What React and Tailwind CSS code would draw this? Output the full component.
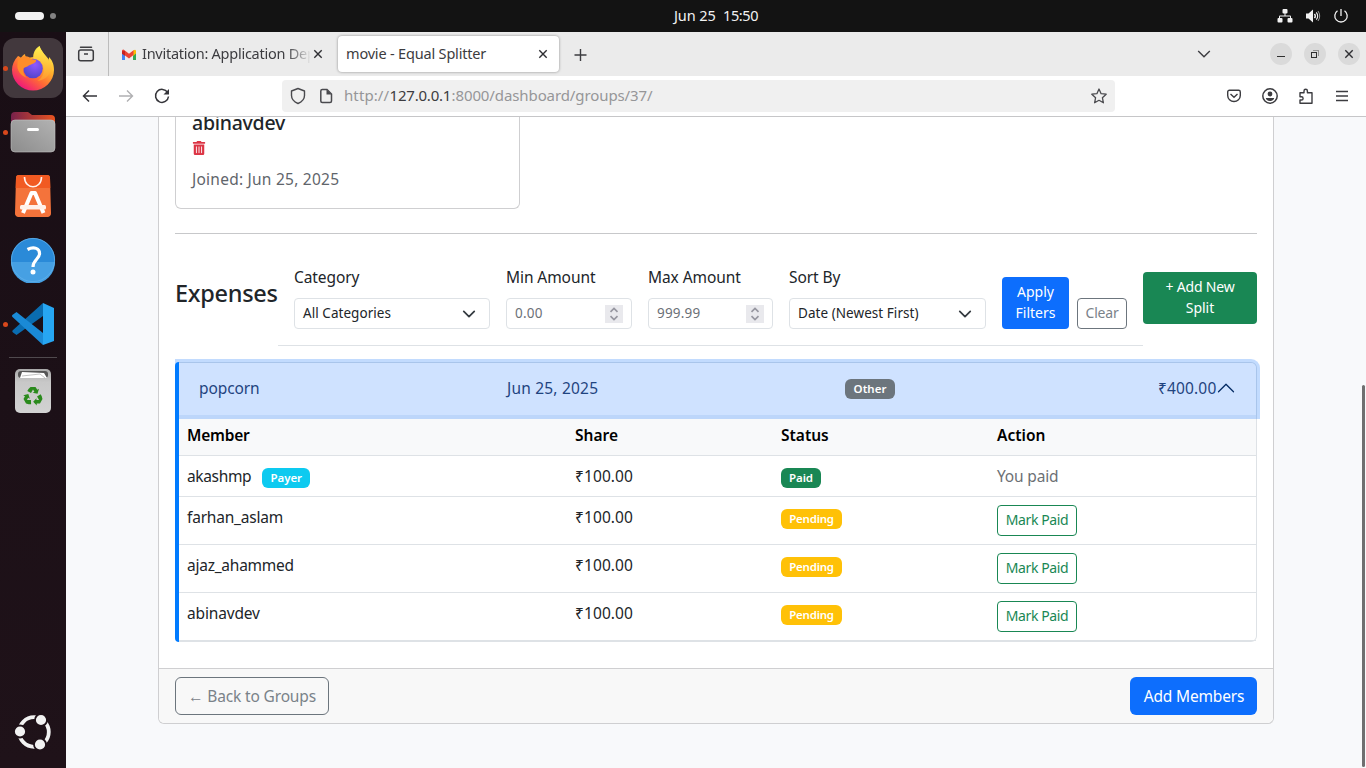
import { FaTrashAlt } from "react-icons/fa";

const MEMBERS = [
  { name: "akashmp", tracking: "tracking-[-0.35px]", payer: true },
  { name: "farhan_aslam", tracking: "tracking-[-0.2px]" },
  { name: "ajaz_ahammed", tracking: "tracking-[-0.24px]" },
  { name: "abinavdev", tracking: "tracking-[-0.16px]" },
];

function TopBar() {
  return (
    <header className="relative flex h-8 shrink-0 items-center justify-between bg-[#131313] text-[#f2f2f2]">
      <div className="flex items-center gap-[6px] pl-[15px]">
        <span className="h-2 w-[29px] rounded-full bg-[#f2f2f2]" />
        <span className="h-[6px] w-[6px] rounded-full bg-[#828282]" />
      </div>
      <div className="absolute inset-x-0 top-0 flex justify-center gap-[7px] pl-[66px] text-[14.5px] leading-[30px]">
        <span className="w-[42px] whitespace-nowrap tracking-[-0.1px]">Jun 25</span>
        <span className="w-[35px] whitespace-nowrap tracking-[-0.4px]">15:50</span>
      </div>
      <div className="flex items-center pr-[17px]">
        <svg width="16" height="16" viewBox="0 0 16 16" fill="currentColor">
          <rect x="5.5" y="1" width="5" height="4.5" rx="1" />
          <rect x="0.5" y="10" width="5" height="4.5" rx="1" />
          <rect x="10.5" y="10" width="5" height="4.5" rx="1" />
          <path d="M7.5 5h1v2.5H13a1 1 0 0 1 1 1V10h-1V8.5H3V10H2V8.500a1 1 0 0 1 1-1h4.500z" />
        </svg>
        <svg className="ml-3" width="16" height="16" viewBox="0 0 16 16" fill="none" stroke="currentColor">
          <path d="M1 5.500h2.500L8 1.500v13L3.500 10.500H1z" fill="currentColor" stroke="none" />
          <path d="M9.500 5.800q1.600 2.200 0 4.400" strokeWidth="1.400" />
          <path d="M11.300 4.300q2.800 3.700 0 7.400" strokeWidth="1.100" />
          <path d="M13 3q3.400 5 0 10" strokeWidth=".9" opacity=".7" />
        </svg>
        <svg className="ml-3" width="16" height="16" viewBox="0 0 16 16" fill="none" stroke="currentColor" strokeWidth="1.3">
          <path d="M4.500 2.700a6.200 6.200 0 1 0 7 0M8 1v7" />
        </svg>
      </div>
    </header>
  );
}

function FirefoxIcon() {
  return (
    <svg width="44" height="46" viewBox="0 0 44 46">
      <defs>
        <linearGradient id="fxBody" x1=".85" y1=".1" x2=".25" y2=".95">
          <stop offset="0" stopColor="#fff04a" />
          <stop offset=".35" stopColor="#ffb02c" />
          <stop offset=".65" stopColor="#ff6a35" />
          <stop offset="1" stopColor="#f0197a" />
        </linearGradient>
        <radialGradient id="fxGlobe" cx=".6" cy=".3" r=".8">
          <stop offset="0" stopColor="#9059ff" />
          <stop offset="1" stopColor="#4a42c4" />
        </radialGradient>
        <linearGradient id="fxTail" x1=".5" y1="0" x2=".5" y2="1">
          <stop offset="0" stopColor="#fff44f" />
          <stop offset="1" stopColor="#ff9a2e" />
        </linearGradient>
      </defs>
      <path d="M7 11C3 15 1 20 1 25a21 20.500 0 0 0 42 0c0-6-2-10-5-13v4C35 10 30 6 28.500 1c-4 3-6 7-6 11l-6.500 1c-1-1-2-2-2-4-2 1-3 2-4 4-1-1-2-2-3-2z" fill="url(#fxBody)" />
      <path d="M28.500 1c-5 3-7 8-6 13 5 0 9 4 10 8 1.500 5-1 11-6 14 9-1 14-8 14-15 0-8-10-11-12-20z" fill="url(#fxTail)" opacity=".85" />
      <circle cx="22" cy="23.500" r="9.800" fill="url(#fxGlobe)" />
      <path d="M9 13c5-3 9-2 11 1l5 1c1 3-5 4-8 6-1.500 1.500-4 1-4.500 3-1 3 1 7 4 9-7-2-11-8-10-14 0-3 .5-4 2.500-6z" fill="#ff8d29" />
    </svg>
  );
}

function FilesIcon() {
  return (
    <svg width="46" height="42" viewBox="0 0 46 42">
      <defs>
        <linearGradient id="flBack"><stop offset="0" stopColor="#77214b" /><stop offset="1" stopColor="#e95420" /></linearGradient>
        <linearGradient id="flFront" x1="0" y1="1" x2="1" y2="0"><stop offset="0" stopColor="#8c8c8c" /><stop offset="1" stopColor="#b2b2b2" /></linearGradient>
      </defs>
      <path d="M1 5a4 4 0 0 1 4-4h13l4 3h19a4 4 0 0 1 4 4v10H1z" fill="url(#flBack)" />
      <rect x="1" y="9" width="44" height="32" rx="4" fill="url(#flFront)" stroke="#c3c3c3" strokeWidth=".6" />
      <rect x="17" y="17" width="12" height="3" rx="1.500" fill="#fff" />
    </svg>
  );
}

function SoftwareIcon() {
  return (
    <svg width="38" height="44" viewBox="0 0 38 44">
      <path d="M5 1h28a3 3 0 0 1 3 3l1 35a3.500 3.500 0 0 1-3.500 4h-29A3.500 3.500 0 0 1 1 39L2 4a3 3 0 0 1 3-3z" fill="#f4733b" />
      <path d="M5 1h28a3 3 0 0 1 3 3l.3 10H1.700L2 4a3 3 0 0 1 3-3z" fill="#f15a22" />
      <path d="M10.500 3c0 13 17 13 17 0" fill="none" stroke="#fff3ee" strokeWidth="1.600" />
      <path d="M9 39 17.500 19h3.500L29.500 39M17.500 19h3.500" fill="none" stroke="#fff" strokeWidth="4" strokeLinejoin="round" />
      <rect x="6" y="31" width="26" height="4.500" rx="1.500" fill="#fff1ea" />
    </svg>
  );
}

function HelpIcon() {
  return (
    <svg width="46" height="46" viewBox="0 0 46 46">
      <circle cx="23" cy="23" r="22" fill="#2a8ad8" />
      <path d="M1 25a22 22 0 0 0 44 0z" fill="#46a0e3" />
      <circle cx="23" cy="23" r="21.600" fill="none" stroke="#5fb0ea" strokeWidth=".8" />
      <path d="M17.500 12.500C24 9 30 11.500 29.500 17c-.3 5-6.500 6-6.500 13" fill="none" stroke="#fff" strokeWidth="3.200" />
      <circle cx="23" cy="35" r="2.500" fill="#fff" />
    </svg>
  );
}

function CodeIcon() {
  return (
    <svg width="44" height="44" viewBox="0 0 44 44">
      <path d="M1.500 28.500 32 1v13L5.500 33 2 30.500a1.500 1.500 0 0 1-.5-2z" fill="#0a6cb0" />
      <path d="M2 12.500 5.500 10 32 31v12L1.500 15a1.500 1.500 0 0 1 .5-2.500z" fill="#1a8ad6" />
      <path d="M32 1l11 5v33l-11 4z" fill="#27a6f2" />
    </svg>
  );
}

function TrashIcon() {
  return (
    <svg width="38" height="46" viewBox="0 0 38 46">
      <defs><linearGradient id="tr" x1="0" y1="0" x2="0" y2="1"><stop offset="0" stopColor="#a9a9a9" /><stop offset=".3" stopColor="#c8c8c8" /><stop offset="1" stopColor="#d2d2d2" /></linearGradient></defs>
      <rect x="1" y="1" width="36" height="44" rx="5" fill="url(#tr)" />
      <rect x="4" y="3" width="30" height="7" rx="3" fill="#555" />
      <path d="M6 10 8 4l22 1 3 5z" fill="#fff" />
      <path d="M8 8l18-2 5 4" fill="none" stroke="#999" strokeWidth=".6" />
      <g fill="#2a8a1c">
        <path d="m14.500 21 2-2h5l1.800 2.700 1.700-1-1.500 5-4.800-1 1.700-1-1.400-2.200-2 3.500-3.700-2z" />
        <path d="m14.500 21 2-2h5l1.800 2.700 1.700-1-1.500 5-4.800-1 1.700-1-1.400-2.200-2 3.500-3.700-2z" transform="rotate(120 19 28.500)" />
        <path d="m14.500 21 2-2h5l1.800 2.700 1.700-1-1.500 5-4.800-1 1.700-1-1.400-2.200-2 3.500-3.700-2z" transform="rotate(240 19 28.500)" />
      </g>
    </svg>
  );
}

function UbuntuIcon() {
  return (
    <svg width="40" height="40" viewBox="0 0 40 40">
      <circle cx="21" cy="20" r="14.800" fill="none" stroke="#f2f2f2" strokeWidth="3.800" />
      <g fill="#f2f2f2" stroke="#1f1219" strokeWidth="1.800">
        <circle cx="7" cy="19.500" r="6" />
        <circle cx="28" cy="8" r="6" />
        <circle cx="27" cy="32.500" r="6" />
      </g>
    </svg>
  );
}

function DockItem({ running, active, children }) {
  return (
    <div className="relative flex h-16 w-[66px] items-center justify-center">
      {running && <span className="absolute left-[3px] top-[30px] z-10 h-[5px] w-[5px] rounded-full bg-[#d9481c]" />}
      <div className={active ? "flex h-[60px] w-[60px] items-center justify-center rounded-xl bg-[#42383d]" : "flex items-center justify-center"}>
        {children}
      </div>
    </div>
  );
}

function Dock() {
  return (
    <aside className="flex w-[66px] shrink-0 flex-col items-center bg-gradient-to-b from-[#190e15] to-[#1f1219] pt-1">
      <DockItem running active><FirefoxIcon /></DockItem>
      <DockItem running><FilesIcon /></DockItem>
      <DockItem><SoftwareIcon /></DockItem>
      <DockItem><HelpIcon /></DockItem>
      <DockItem running><CodeIcon /></DockItem>
      <div className="mt-px h-px w-12 bg-[#504a4e]" />
      <div className="mt-[10px]"><TrashIcon /></div>
      <div className="mb-4 mt-auto pr-px"><UbuntuIcon /></div>
    </aside>
  );
}

function CloseGlyph() {
  return (
    <svg className="shrink-0" width="10" height="10" viewBox="0 0 10 10" stroke="#2f2f33" strokeWidth="1.400">
      <path d="M1.300 1.300l7.400 7.400M8.700 1.300 1.300 8.700" />
    </svg>
  );
}

function TabStrip() {
  return (
    <div className="flex h-11 shrink-0 items-center bg-[#ebebeb] text-[14.500px] text-[#3c3c40]">
      <div className="flex h-full w-[43px] items-center justify-center border-r border-[#bcbcbc] pr-[3px]">
        <svg width="18" height="18" viewBox="0 0 18 18" fill="none" stroke="#3d3d40" strokeWidth="1.500">
          <path d="M3.500 2.200h11" strokeLinecap="round" />
          <rect x="1.700" y="5" width="14.600" height="10.800" rx="2" />
          <path d="M7 9h4" />
        </svg>
      </div>
      <div className="flex h-full w-[229px] items-center pl-3">
        <svg className="mt-px shrink-0" width="16" height="12" viewBox="0 0 16 12">
          <path d="M1 2.500v8.500h3V5z" fill="#4285f4" />
          <path d="M15 2.500v8.500h-3V5z" fill="#34a853" />
          <path d="M12 1.500 14 .8a1.200 1.200 0 0 1 1 1.200v2.500L12 7z" fill="#fbbc04" />
          <path d="M1 2.200A1.300 1.300 0 0 1 3.200 1L8 4.800 12.500 1.200V6L8 9.500 4 6.500 1 4.500z" fill="#ea4335" />
          <path d="M1 2.200v2.500l3 2V2z" fill="#c5221f" />
        </svg>
        <span className="ml-[5px] w-[168px] overflow-hidden whitespace-nowrap tracking-[-0.26px] [mask-image:linear-gradient(to_right,black_145px,transparent_169px)]">
          Invitation: Application Dep
        </span>
        <span className="ml-[3px]"><CloseGlyph /></span>
      </div>
      <div className="flex h-9 w-[221px] items-center justify-between rounded bg-white pl-2 pr-[11px] shadow-[0_0_3px_rgba(0,0,0,0.4)]">
        <span className="whitespace-nowrap tracking-[-0.18px]">movie - Equal Splitter</span>
        <CloseGlyph />
      </div>
      <svg className="ml-[14px] mt-px" width="14" height="14" viewBox="0 0 14 14" stroke="#3c3c40" strokeWidth="1.400">
        <path d="M7.500 1v12M1.500 7h12" />
      </svg>
      <svg className="ml-auto" width="14" height="10" viewBox="0 0 14 10" fill="none" stroke="#3c3c40" strokeWidth="1.400">
        <path d="M1.200 2 7 7.800 12.800 2" />
      </svg>
      <div className="ml-[59px] flex gap-3 pr-[6px]">
        <span className="flex h-[22px] w-[22px] items-center justify-center rounded-full bg-[#dadada]">
          <span className="mt-[5px] h-px w-2 bg-[#2f2f2f]" />
        </span>
        <span className="flex h-[22px] w-[22px] items-center justify-center rounded-full bg-[#dadada]">
          <svg width="10" height="10" viewBox="0 0 10 10" fill="none" shapeRendering="crispEdges">
            <path d="M3 1.500h5.500V7" stroke="#929292" />
            <rect x="1.500" y="3.500" width="5" height="5" stroke="#2f2f2f" />
          </svg>
        </span>
        <span className="flex h-[22px] w-[22px] items-center justify-center rounded-full bg-[#dadada]">
          <CloseGlyph />
        </span>
      </div>
    </div>
  );
}

function Toolbar() {
  return (
    <div className="flex h-[41px] shrink-0 items-center border-b border-[#c6c6c8] bg-white pl-4 text-[#3c3c40]">
      <svg width="16" height="16" viewBox="0 0 16 16" fill="none" stroke="#35353a" strokeWidth="1.500">
        <path d="M15 8H1.500M7 2.500 1.500 8 7 13.500" />
      </svg>
      <svg className="ml-5" width="16" height="16" viewBox="0 0 16 16" fill="none" stroke="#b0b0b2" strokeWidth="1.400">
        <path d="M1 8h13.500M9 2.500 14.500 8 9 13.500" />
      </svg>
      <svg className="ml-5" width="16" height="16" viewBox="0 0 16 16" fill="none" stroke="#35353a" strokeWidth="1.500">
        <path d="M13.600 4.500A6.500 6.500 0 1 0 14.500 8.500" />
        <path d="M15 1v5.500H9.500z" fill="#35353a" stroke="none" />
      </svg>
      <div className="ml-28 flex h-8 w-[833px] items-center rounded bg-[#f0f0f0] pl-2">
        <svg width="16" height="18" viewBox="0 0 16 18" fill="none" stroke="#4a4a4e" strokeWidth="1.400" strokeLinejoin="round">
          <path d="M8 1.500 14.500 4v4.500c0 3.500-3 6.500-6.500 8-3.500-1.500-6.500-4.500-6.500-8V4z" />
        </svg>
        <svg className="ml-3" width="16" height="16" viewBox="0 0 16 16" fill="none" stroke="#4a4a4e" strokeWidth="1.500">
          <path d="M2.800 3a1.500 1.500 0 0 1 1.500-1.500H9L13.500 6v7a1.500 1.500 0 0 1-1.500 1.500H4.300A1.500 1.500 0 0 1 2.800 13z" />
          <path d="M8.500 1.500V6.500h5z" fill="#4a4a4e" stroke="none" />
        </svg>
        <div className="mb-[2px] ml-[10px] flex whitespace-nowrap text-[15px] leading-[30px] text-[#969698]">
          <span className="w-[45.500px] tracking-[0.1px]">http://</span>
          <span className="w-[62px] tracking-[-0.2px] text-[#3c3c40]">127.0.0.1</span>
          <span className="tracking-[-0.1px]">:8000/dashboard/groups/37/</span>
        </div>
        <svg className="ml-auto mr-2" width="16" height="16" viewBox="0 0 16 16" fill="none" stroke="#4a4a4e" strokeWidth="1.300" strokeLinejoin="round">
          <path d="m8 1 2.100 4.700 5.100.5-3.800 3.500 1 5.100L8 12.300 3.600 14.800l1-5.100L.8 6.200l5.100-.5z" />
        </svg>
      </div>
      <div className="ml-auto flex items-center gap-5 pr-4">
        <svg width="16" height="16" viewBox="0 0 16 16" fill="none" stroke="#3c3c40" strokeWidth="1.400">
          <path d="M1.700 4A1.700 1.700 0 0 1 3.400 2.300h9.200A1.700 1.700 0 0 1 14.300 4v3.500a6.300 6 0 0 1-12.600 0z" />
          <path d="M4.500 6 8 9.200 11.500 6" />
        </svg>
        <svg width="16" height="16" viewBox="0 0 16 16" fill="none">
          <circle cx="8" cy="8" r="7.200" stroke="#3c3c40" strokeWidth="1.500" />
          <circle cx="8" cy="6" r="2.400" fill="#3c3c40" />
          <path d="M3.800 10h8.400c0 1.500-1.700 3-4.200 3s-4.200-1.500-4.200-3z" fill="#3c3c40" />
        </svg>
        <svg width="16" height="16" viewBox="0 0 16 16" fill="none" stroke="#3c3c40" strokeWidth="1.400" strokeLinejoin="round">
          <path d="M2 5.500V4.800h4V3a1.700 1.700 0 0 1 3.400 0v1.800H14v10.500H2V12h1.500a1.600 1.600 0 0 0 0-3.200H2z" />
        </svg>
        <svg width="16" height="16" viewBox="0 0 16 16" stroke="#3c3c40" strokeWidth="1.300">
          <path d="M2 3.500h12M2 8h12M2 12.500h12" />
        </svg>
      </div>
    </div>
  );
}

function SelectBox({ children }) {
  return (
    <div className="flex h-[31px] items-center justify-between whitespace-nowrap rounded border border-[#dee2e6] bg-white pl-2 pr-[13px] text-[13.500px] leading-[21px] tracking-[0.05px]">
      {children}
      <svg width="14" height="14" viewBox="0 0 16 16" fill="none" stroke="#343a40" strokeWidth="2" strokeLinecap="round" strokeLinejoin="round">
        <path d="m2 5 6 6 6-6" />
      </svg>
    </div>
  );
}

function NumberBox({ children }) {
  return (
    <div className="flex h-[31px] items-center justify-between rounded border border-[#dee2e6] bg-white pl-2 pr-2 text-[13.500px] leading-[21px] tracking-[0.200px] text-[#6c7178]">
      {children}
      <span className="flex h-[18px] w-[18px] items-center justify-center bg-[#e9e9ed]">
        <svg width="10" height="14" viewBox="0 0 10 14" fill="none" stroke="#9696a0" strokeWidth="1.700">
          <path d="M1.500 4.800 5 1.500l3.500 3.300M1.500 9.200 5 12.500l3.500-3.300" />
        </svg>
      </span>
    </div>
  );
}

function Field({ label, width, children }) {
  return (
    <div className={width}>
      <div className="-mt-px mb-[9px] whitespace-nowrap leading-6 tracking-[-0.080px]">{label}</div>
      {children}
    </div>
  );
}

function Badge({ className, children }) {
  return (
    <span className={"flex h-5 items-center justify-center whitespace-nowrap rounded-md pb-px text-[11.500px] font-semibold text-white " + className}>
      {children}
    </span>
  );
}

function Filters() {
  return (
    <div className="flex items-center">
      <h4 className="mb-[10px] w-[103px] whitespace-nowrap text-[23.500px] font-medium leading-[29px] tracking-[-0.300px]">Expenses</h4>
      <div className="flex h-[96px] w-[865px] items-end border-b border-[#dee2e6] pb-4 pl-4">
        <Field label="Category" width="w-[196px]"><SelectBox>All Categories</SelectBox></Field>
        <Field label="Min Amount" width="ml-4 w-[126px]"><NumberBox>0.00</NumberBox></Field>
        <Field label="Max Amount" width="ml-4 w-[125px]"><NumberBox>999.99</NumberBox></Field>
        <Field label="Sort By" width="ml-4 w-[197px]"><SelectBox>Date (Newest First)</SelectBox></Field>
        <button className="ml-4 flex h-[52px] w-[67px] flex-col items-center justify-center rounded bg-[#0d6efd] pb-[2px] text-[14px] leading-[21px] text-white">
          <span>Apply</span>
          <span>Filters</span>
        </button>
        <button className="ml-2 h-[31px] w-[50px] rounded border border-[#6c757d] pb-[2px] text-[14px] leading-[21px] tracking-[-0.200px] text-[#7a8289]">Clear</button>
      </div>
      <button className="flex h-[52px] w-[114px] flex-col items-center justify-center rounded bg-[#198754] pb-[2px] text-[14px] leading-[21px] text-white">
        <span className="tracking-[-0.200px]">+ Add New</span>
        <span>Split</span>
      </button>
    </div>
  );
}

const ROW = "grid grid-cols-[388px_206px_216px_267px] border-b border-[#dee2e6] [&>*]:px-2";

function Expense() {
  return (
    <div className="mt-4 flex h-[280px] w-[1082px]">
      <div className="relative z-10 w-1 shrink-0 rounded-l-[4px] bg-[#007bff]" />
      <div className="w-[1078px] rounded-r-md border-b border-r border-t border-[#dee2e6]">
        <div className="relative flex h-[52px] items-center rounded-tr-[5px] bg-[#cfe2ff] pb-[2px] text-[#1f4480] shadow-[0_0_0_4px_rgba(13,110,253,0.250)]">
          <span className="w-[328px] pl-5 tracking-[-0.100px]">popcorn</span>
          <span className="tracking-[0.200px]">Jun 25, 2025</span>
          <Badge className="absolute left-[666px] top-4 w-[50px] bg-[#6c757d]">Other</Badge>
          <span className="ml-auto w-[58px] whitespace-nowrap tracking-[0.150px]">₹400.00</span>
          <svg className="mr-5" width="20" height="20" viewBox="0 0 16 16" fill="#052c65">
            <path d="M1.646 11.354a.5.5 0 0 0 .708 0L8 5.707l5.646 5.647a.5.5 0 0 0 .708-.708l-6-6a.5.5 0 0 0-.708 0l-6 6a.5.5 0 0 0 0 .708" />
          </svg>
        </div>
        <div className={ROW + " h-[41px] bg-[#f8f9fa] pt-2 font-semibold leading-6 text-black"}>
          <span className="tracking-[-0.200px]">Member</span>
          <span>Share</span>
          <span>Status</span>
          <span>Action</span>
        </div>
        {MEMBERS.map((m) => (
          <div key={m.name} className={ROW + (m.payer ? " h-[41px]" : " h-12") + " pt-2 leading-6"}>
            <div className="flex">
              <span className={m.tracking}>{m.name}</span>
              {m.payer && <Badge className="ml-[11px] mt-1 w-12 bg-[#0dcaf0] tracking-[-0.100px]">Payer</Badge>}
            </div>
            <span className="tracking-[0.100px]">₹100.00</span>
            <div>
              {m.payer
                ? <Badge className="mt-1 w-10 bg-[#198754] tracking-[-0.100px]">Paid</Badge>
                : <Badge className="mt-1 w-[61px] bg-[#ffc107] tracking-[-0.250px]">Pending</Badge>}
            </div>
            <div>
              {m.payer
                ? <span className="tracking-[-0.160px] text-[#6c7075]">You paid</span>
                : <button className="block h-[31px] w-20 whitespace-nowrap rounded border border-[#198754] pb-[2px] text-[14px] leading-[21px] tracking-[-0.390px] text-[#198754]">Mark Paid</button>}
            </div>
          </div>
        ))}
      </div>
    </div>
  );
}

function Page() {
  return (
    <main className="relative h-[651px] overflow-hidden bg-[#f8f9fb] pl-[92px] text-[15.500px] leading-6 text-[#212529]">
      <div className="flex h-[607px] w-[1116px] flex-col rounded-b-md border border-t-0 border-[#cfcfd1] bg-white">
        <div className="flex-1 px-4">
          <div className="flex h-[92px] w-[345px] flex-col rounded-b-md border border-t-0 border-[#cfcfd1] px-4">
            <h5 className="-mt-[6px] text-[19.500px] font-medium leading-6 tracking-[-0.260px]">abinavdev</h5>
            <FaTrashAlt className="mt-[6px] h-[14px] w-[14px] text-[#dc3545]" />
            <p className="mt-3 tracking-[0.240px] text-[#5f656b]">Joined: Jun 25, 2025</p>
          </div>
          <div className="mb-4 mt-6 h-px bg-[#c7c8ca]" />
          <Filters />
          <Expense />
        </div>
        <div className="flex h-[55px] items-center justify-between rounded-b-md border-t border-[#cfcfd1] bg-[#f8f8f8] px-4">
          <button className="h-[38px] w-[154px] whitespace-nowrap rounded-md border border-[#6c757d] tracking-[-0.150px] text-[#7a8289]">← Back to Groups</button>
          <button className="h-[38px] w-[127px] whitespace-nowrap rounded-md bg-[#0d6efd] pl-px tracking-[-0.180px] text-white">Add Members</button>
        </div>
      </div>
      <div className="absolute bottom-px right-px top-[268px] w-[3px] rounded-full bg-[#6f6f70]" />
    </main>
  );
}

export default function App() {
  return (
    <div className="flex h-[768px] w-[1366px] flex-col overflow-hidden font-['Noto_Sans','Open_Sans',sans-serif]">
      <TopBar />
      <div className="flex min-h-0 flex-1">
        <Dock />
        <div className="flex w-[1300px] flex-col">
          <TabStrip />
          <Toolbar />
          <Page />
        </div>
      </div>
    </div>
  );
}
